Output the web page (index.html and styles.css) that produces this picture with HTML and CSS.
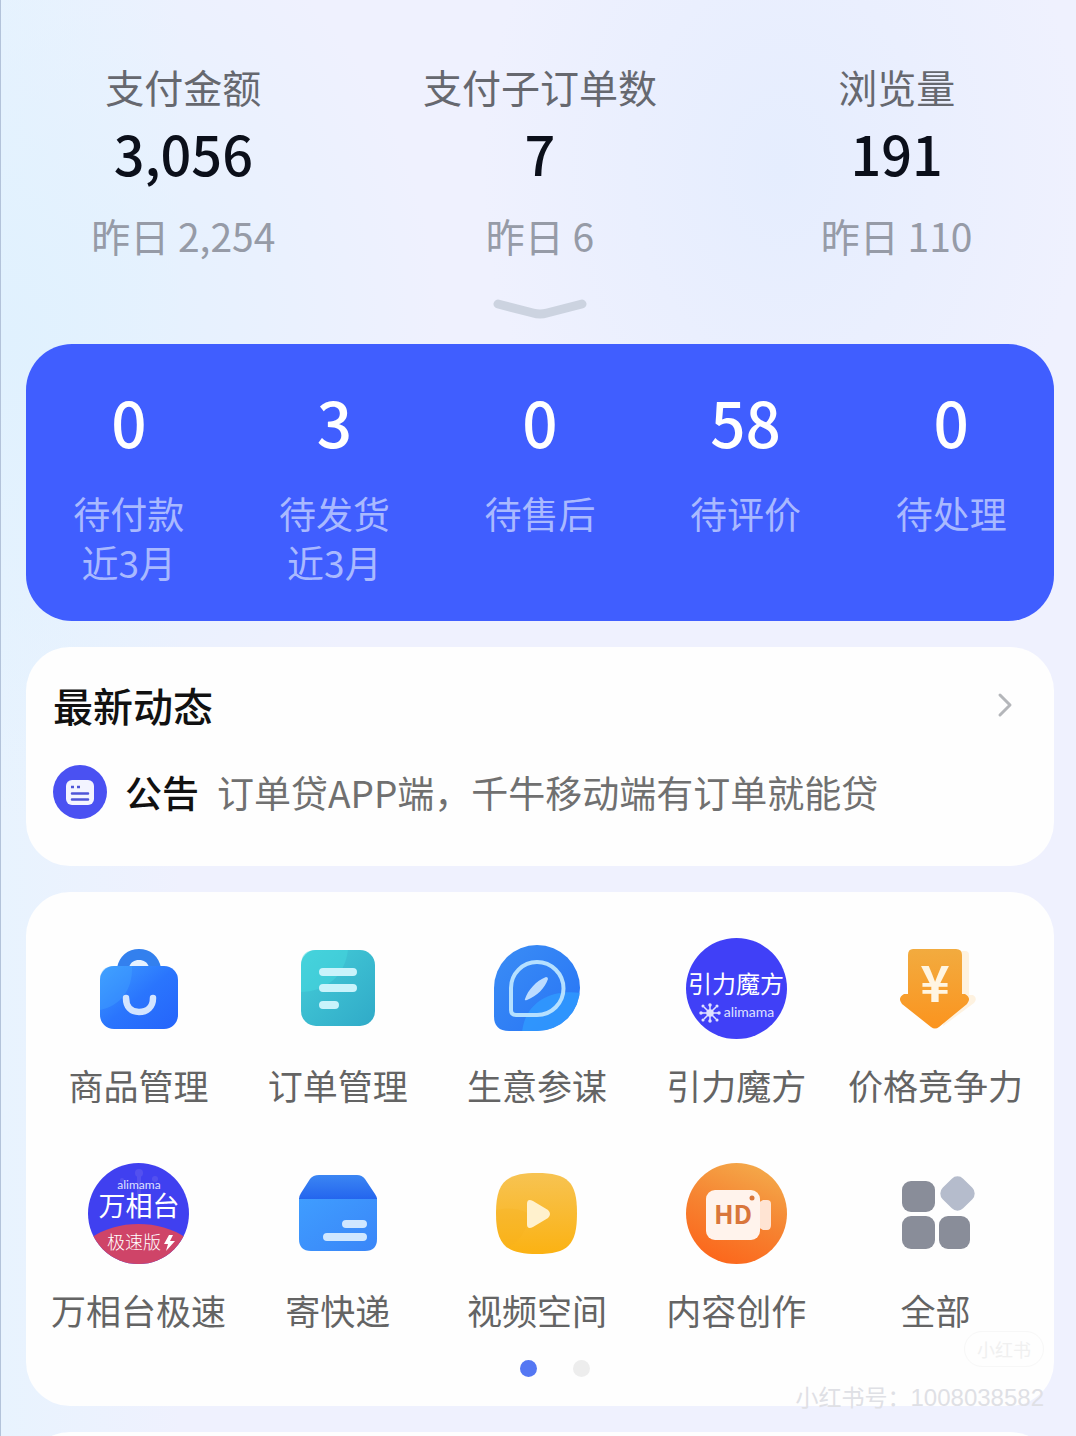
FILE: index.html
```
<!DOCTYPE html>
<html lang="zh-CN">
<head>
    <meta charset="UTF-8">
    <meta name="viewport" content="width=device-width, initial-scale=1.0">
    <title>千牛工作台</title>
    <link rel="stylesheet" href="styles.css">
</head>
<body>
    <main class="page">
        <!-- 店铺数据 -->
        <section class="stats">
            <div class="stat">
                <div class="stat-label">支付金额</div>
                <div class="stat-value">3,056</div>
                <div class="stat-prev">昨日 2,254</div>
            </div>
            <div class="stat">
                <div class="stat-label">支付子订单数</div>
                <div class="stat-value">7</div>
                <div class="stat-prev">昨日 6</div>
            </div>
            <div class="stat">
                <div class="stat-label">浏览量</div>
                <div class="stat-value">191</div>
                <div class="stat-prev">昨日 110</div>
            </div>
        </section>
        <button class="expand" aria-label="展开">
            <svg width="96" height="24" viewBox="0 0 96 24"><path d="M6 7 L41 16 Q48 18 55 16 L90 7" fill="none" stroke="#ccd3e0" stroke-width="9" stroke-linecap="round"/></svg>
        </button>

        <!-- 待办 -->
        <nav class="todo">
            <a class="todo-item" href="#"><span class="todo-num">0</span><span>待付款</span><span>近3月</span></a>
            <a class="todo-item" href="#"><span class="todo-num">3</span><span>待发货</span><span>近3月</span></a>
            <a class="todo-item" href="#"><span class="todo-num">0</span><span>待售后</span></a>
            <a class="todo-item" href="#"><span class="todo-num">58</span><span>待评价</span></a>
            <a class="todo-item" href="#"><span class="todo-num">0</span><span>待处理</span></a>
        </nav>

        <!-- 最新动态 -->
        <section class="card news">
            <div class="news-head">
                <h2>最新动态</h2>
                <a class="more" href="#" aria-label="更多">
                    <svg width="16" height="26" viewBox="0 0 16 26"><path d="M3 3 L13 13 L3 23" fill="none" stroke="#b4b6ba" stroke-width="3" stroke-linecap="round" stroke-linejoin="round"/></svg>
                </a>
            </div>
            <a class="news-row" href="#">
                <svg width="54" height="54" viewBox="0 0 54 54">
                    <circle cx="27" cy="27" r="27" fill="#4a51f2"/>
                    <rect x="13" y="15" width="28" height="25" rx="6" fill="#f3f4ff"/>
                    <path d="M19 28.500h16M19 34.500h16" stroke="#4f55d8" stroke-width="2.500" stroke-linecap="round"/>
                    <path d="M18 22h3M24 22h3" stroke="#4f55d8" stroke-width="2.500"/>
                </svg>
                <strong>公告</strong>
                <span class="news-text">订单贷APP端，千牛移动端有订单就能贷</span>
            </a>
        </section>

        <!-- 常用工具 -->
        <section class="card tools">
            <div class="tool-grid">
                <a class="tool" href="#">
                    <svg viewBox="0 0 101 101">
                        <defs>
                            <linearGradient id="bag" x1="0" y1="0" x2="1" y2="1"><stop offset="0" stop-color="#3e9dff"/><stop offset=".5" stop-color="#2a75fd"/><stop offset="1" stop-color="#2564fb"/></linearGradient>
                        </defs>
                        <path d="M29 30 C31 18 40 11 51 11 C62 11 71 18 73 30 Z" fill="#3380ee"/>
                        <path d="M41 29 C43 24 46 22 51 22 C56 22 59 24 61 29 Z" fill="#e6f2ff"/>
                        <rect x="12" y="28" width="78" height="63" rx="14" fill="url(#bag)"/>
                        <path d="M12 72 C32 68 45 52 44 28 H26 Q12 28 12 42 Z" fill="#46a8ff" opacity=".35"/>
                        <path d="M38 60 C38 69 43 74 51 74 C59 74 65 69 65 60" fill="none" stroke="#d3e5ff" stroke-width="6.500" stroke-linecap="round"/>
                    </svg>
                    <span>商品管理</span>
                </a>
                <a class="tool" href="#">
                    <svg viewBox="0 0 101 101">
                        <defs>
                            <linearGradient id="order" x1="0" y1="0" x2="1" y2="1"><stop offset="0" stop-color="#45cdd8"/><stop offset="1" stop-color="#30aac8"/></linearGradient>
                        </defs>
                        <rect x="14" y="12" width="74" height="76" rx="15" fill="url(#order)"/>
                        <path d="M14 54 C38 54 58 38 61 12 H29 Q14 12 14 27 Z" fill="#45d9df" opacity=".5"/>
                        <path d="M36 34h30M36 50h30M36 67h12" stroke="#c9f3fb" stroke-width="8" stroke-linecap="round"/>
                    </svg>
                    <span>订单管理</span>
                </a>
                <a class="tool" href="#">
                    <svg viewBox="0 0 101 101">
                        <defs>
                            <linearGradient id="compass" x1="0" y1="0" x2="1" y2="1"><stop offset="0" stop-color="#3c8ff5"/><stop offset="1" stop-color="#2672f5"/></linearGradient>
                            <clipPath id="drop"><path d="M51 7 A43 43 0 0 1 51 93 H23 Q8 93 8 78 V50 A43 43 0 0 1 51 7 Z"/></clipPath>
                        </defs>
                        <g clip-path="url(#drop)">
                            <rect width="101" height="101" fill="url(#compass)"/>
                            <path d="M36 95 C38 68 60 50 96 55 V95 Z" fill="#2f9bff" opacity=".8"/>
                        </g>
                        <path d="M51 24 A26.500 26.500 0 0 1 51 77 H30 Q25 77 25 72 V50 A26 26 0 0 1 51 24 Z" fill="none" stroke="#b5e0ff" stroke-width="4"/>
                        <path d="M39 61 C42 52 50 43 60 39 Q62 39 62 41 C59 50 51 58 41 62 Q38 63 39 61 Z" fill="#bcdcff"/>
                    </svg>
                    <span>生意参谋</span>
                </a>
                <a class="tool" href="#">
                    <svg viewBox="0 0 101 101">
                        <circle cx="50.500" cy="50.500" r="50.500" fill="#4040f7"/>
                        <text class="logo-text wide" x="50" y="55" font-size="24">引力魔方</text>
                        <g stroke="#dfe2ff" stroke-width="1.500" fill="#dfe2ff">
                            <path d="M24 67v16M16 75h16M18 69l12 12M30 69l-12 12"/>
                            <circle cx="24" cy="75" r="3"/>
                            <circle cx="24" cy="67" r="1"/><circle cx="24" cy="83" r="1"/>
                            <circle cx="15" cy="75" r="1"/><circle cx="33" cy="75" r="1"/>
                            <circle cx="17" cy="68" r=".8"/><circle cx="31" cy="68" r=".8"/>
                            <circle cx="17" cy="82" r=".8"/><circle cx="31" cy="82" r=".8"/>
                        </g>
                        <text class="logo-latin" x="63" y="79" font-size="14">alimama</text>
                    </svg>
                    <span>引力魔方</span>
                </a>
                <a class="tool" href="#">
                    <svg viewBox="0 0 101 101">
                        <defs>
                            <linearGradient id="price" x1="0" y1="0" x2="0" y2="1"><stop offset="0" stop-color="#f2ab3f"/><stop offset="1" stop-color="#fb941f"/></linearGradient>
                        </defs>
                        <path d="M76 13 h4 q4 0 4 4 V57 h4 q5 3 1 8 L58 88 Z" fill="#fdeacb" opacity=".6"/>
                        <path d="M28 11 H71 Q77 11 77 17 V56 H80 Q87 60 82 66 L54 89 Q50 92 46 89 L17 66 Q12 60 19 56 H23 V17 Q23 11 28 11 Z" fill="url(#price)"/>
                        <text class="yen" x="50" y="64" font-size="50">¥</text>
                    </svg>
                    <span>价格竞争力</span>
                </a>
                <a class="tool" href="#">
                    <svg viewBox="0 0 101 101">
                        <defs>
                            <clipPath id="round"><circle cx="50.500" cy="50.500" r="50.500"/></clipPath>
                        </defs>
                        <g clip-path="url(#round)">
                            <rect width="101" height="101" fill="#4040f0"/>
                            <g fill="#5350ef"><circle cx="51" cy="10" r="4"/><circle cx="34" cy="17" r="2"/><circle cx="67" cy="16" r="3"/><rect x="49" y="10" width="4" height="46"/></g>
                            <ellipse cx="50.500" cy="106" rx="66" ry="45" fill="#cf4468"/>
                        </g>
                        <text class="logo-latin" x="51" y="26" font-size="12">alimama</text>
                        <text class="logo-text wide" x="51" y="53" font-size="27">万相台</text>
                        <text class="logo-text" x="46" y="86" font-size="18">极速版</text>
                        <path d="M81 72 L76 81 H80 L78 88 L87 78 H82 L85 72 Z" fill="#fff"/>
                    </svg>
                    <span>万相台极速</span>
                </a>
                <a class="tool" href="#">
                    <svg viewBox="0 0 101 101">
                        <defs>
                            <linearGradient id="box" x1="0" y1="0" x2="1" y2="1"><stop offset="0" stop-color="#3f9dff"/><stop offset="1" stop-color="#3a86f8"/></linearGradient>
                            <linearGradient id="lid" x1="0" y1="0" x2="0" y2="1"><stop offset="0" stop-color="#3b86f3"/><stop offset="1" stop-color="#2465ee"/></linearGradient>
                        </defs>
                        <path d="M12 35 H90 V76 Q90 88 78 88 H24 Q12 88 12 76 Z" fill="url(#box)"/>
                        <path d="M32 12 H70 Q75 12 78 16 L88 31 Q90 34 90 36 H12 Q12 33 14 30 L23 16 Q26 12 32 12 Z" fill="url(#lid)"/>
                        <path d="M59 61h17M40 74h36" stroke="#cfe7ff" stroke-width="8" stroke-linecap="round"/>
                    </svg>
                    <span>寄快递</span>
                </a>
                <a class="tool" href="#">
                    <svg viewBox="0 0 101 101">
                        <defs>
                            <linearGradient id="video" x1="0" y1="0" x2="0" y2="1"><stop offset="0" stop-color="#f7c352"/><stop offset="1" stop-color="#fbb213"/></linearGradient>
                        </defs>
                        <path d="M51 10 C82 10 91 19 91 50 C91 82 82 91 51 91 C20 91 10 82 10 50 C10 19 20 10 51 10 Z" fill="url(#video)"/>
                        <path d="M10 47 C22 45 32 45 41 50 V60 C38 72 30 80 21 85 C13 78 10 66 10 47 Z" fill="#f6ae1c" opacity=".25"/>
                        <path d="M41 41 Q41 35 47 38 L62 47 Q66 51 62 55 L47 64 Q41 67 41 61 Z" fill="#fff1cd"/>
                    </svg>
                    <span>视频空间</span>
                </a>
                <a class="tool" href="#">
                    <svg viewBox="0 0 101 101">
                        <defs>
                            <linearGradient id="hd" x1=".7" y1="0" x2=".3" y2="1"><stop offset="0" stop-color="#f4a94a"/><stop offset=".5" stop-color="#f68331"/><stop offset="1" stop-color="#fc661b"/></linearGradient>
                        </defs>
                        <circle cx="50.500" cy="50.500" r="50.500" fill="url(#hd)"/>
                        <path d="M72 40 L77 37 H81 Q85 37 85 41 V62 Q85 67 81 67 H77 L72 64 Z" fill="#ffe4d3"/>
                        <rect x="20" y="27" width="54" height="50" rx="9" fill="#fff3ec"/>
                        <circle cx="66" cy="35" r="2.500" fill="#d9763b"/>
                        <text class="hd-text" x="47" y="61" font-size="26">HD</text>
                    </svg>
                    <span>内容创作</span>
                </a>
                <a class="tool" href="#">
                    <svg viewBox="0 0 101 101">
                        <g fill="#898d99">
                            <rect x="17" y="18" width="33" height="31" rx="9"/>
                            <rect x="17" y="53" width="33" height="33" rx="9"/>
                            <rect x="54" y="53" width="31" height="33" rx="9"/>
                        </g>
                        <rect x="58" y="16" width="29" height="29" rx="8" fill="#b5bccc" transform="rotate(45 72.500 30.500)"/>
                    </svg>
                    <span>全部</span>
                </a>
            </div>
            <div class="dots"><i class="dot active"></i><i class="dot"></i></div>
        </section>

        <section class="card next"></section>

        <div class="watermark">
            <span class="watermark-badge">小红书</span>
            <span>小红书号：<span class="watermark-id">1008038582</span></span>
        </div>
    </main>
</body>
</html>
```
FILE: styles.css
```
* {
    box-sizing: border-box;
}

body {
    margin: 0;
    font-family: "Noto Sans CJK SC", sans-serif;
    color: #111;
}

a {
    color: inherit;
    text-decoration: none;
}

svg {
    display: block;
    flex: none;
}

.page {
    position: relative;
    height: 100vh;
    overflow: hidden;
    padding: 58px 22px 0 25px;
    border-left: 1px solid #b3c3da;
    background-color: #eff1fe;
    background-image:
        radial-gradient(ellipse 440px 480px at 0 340px, #e0f1fe 0%, rgba(224, 241, 254, 0) 100%),
        radial-gradient(ellipse 300px 400px at 780px 170px, #e5edfe 0%, rgba(229, 237, 254, 0) 100%),
        linear-gradient(to right, #e8f3fe 0, rgba(232, 243, 254, 0) 180px);
}

/* 店铺数据 */
.stats {
    display: grid;
    grid-template-columns: repeat(3, 1fr);
    margin: 0 -21px;
    text-align: center;
}

.stat-label,
.stat-prev {
    font-size: 39px;
    line-height: 56px;
}

.stat-label {
    color: #66686f;
}

.stat-value {
    margin-top: 4px;
    font-size: 54px;
    font-weight: 500;
    line-height: 70px;
    color: #0b0f1a;
}

.stat-prev {
    margin-top: 19px;
    color: #969ba7;
}

.expand {
    display: block;
    margin: 34px auto 23px;
    padding: 0;
    border: none;
    background: none;
    cursor: pointer;
}

/* 待办 */
.todo {
    display: grid;
    grid-template-columns: repeat(5, 1fr);
    padding: 39px 0 34px;
    border-radius: 46px;
    background-color: #405eff;
}

.todo-item {
    display: flex;
    flex-direction: column;
    align-items: center;
    font-size: 37px;
    line-height: 49px;
    color: #a9b9ff;
}

.todo-num {
    margin-bottom: 30px;
    font-size: 62px;
    font-weight: 500;
    line-height: 76px;
    color: #fff;
}

.card {
    margin-top: 26px;
    border-radius: 44px;
    background-color: #fefefe;
}

/* 最新动态 */
.news {
    padding: 30px 41px 47px 27px;
}

.news-head {
    display: flex;
    justify-content: space-between;
    align-items: center;
}

.news-head h2 {
    margin: 0;
    font-size: 40px;
    font-weight: 500;
    line-height: 56px;
}

.news-row {
    display: flex;
    align-items: center;
    margin-top: 32px;
    font-size: 37px;
    line-height: 54px;
}

.news-row strong {
    margin: 0 18px 0 18px;
    font-weight: 500;
}

.news-text {
    color: #707070;
}

/* 常用工具 */
.tools {
    padding: 46px 19px 29px 13px;
}

.tool-grid {
    display: grid;
    grid-template-columns: repeat(5, 1fr);
    row-gap: 53px;
}

.tool {
    display: flex;
    flex-direction: column;
    align-items: center;
    gap: 21px;
    font-size: 35px;
    line-height: 50px;
    color: #646464;
    white-space: nowrap;
}

.tool svg {
    width: 101px;
    height: 101px;
}

.tool text {
    text-anchor: middle;
}

.logo-text {
    font-weight: 300;
    line-height: 1;
    fill: #fff;
}

.logo-text.wide {
    font-weight: 400;
}

.logo-latin {
    font-family: Lato, sans-serif;
    font-weight: 400;
    fill: #dfe0ff;
}

.yen {
    font-weight: 700;
    fill: #fff5e2;
}

.hd-text {
    font-weight: 700;
    fill: #d9763b;
}

.dots {
    display: flex;
    justify-content: center;
    gap: 36px;
    margin-top: 25px;
    padding-left: 35px;
}

.dot {
    width: 17px;
    height: 17px;
    border-radius: 50%;
    background-color: #ededed;
}

.dot.active {
    background-color: #5477f3;
}

.next {
    height: 100px;
}

/* 水印 */
.watermark {
    position: absolute;
    right: 32px;
    bottom: 21px;
    display: flex;
    flex-direction: column;
    align-items: flex-end;
    gap: 12px;
    font-size: 23px;
    line-height: 34px;
    color: #dfe0e5;
}

.watermark-id {
    font-family: "Liberation Sans", sans-serif;
    font-size: 24px;
}

.watermark-badge {
    padding: 0 12px;
    border: 1px solid #f7f7f7;
    border-radius: 18px;
    font-size: 18px;
    color: #f0f0f0;
}
```
